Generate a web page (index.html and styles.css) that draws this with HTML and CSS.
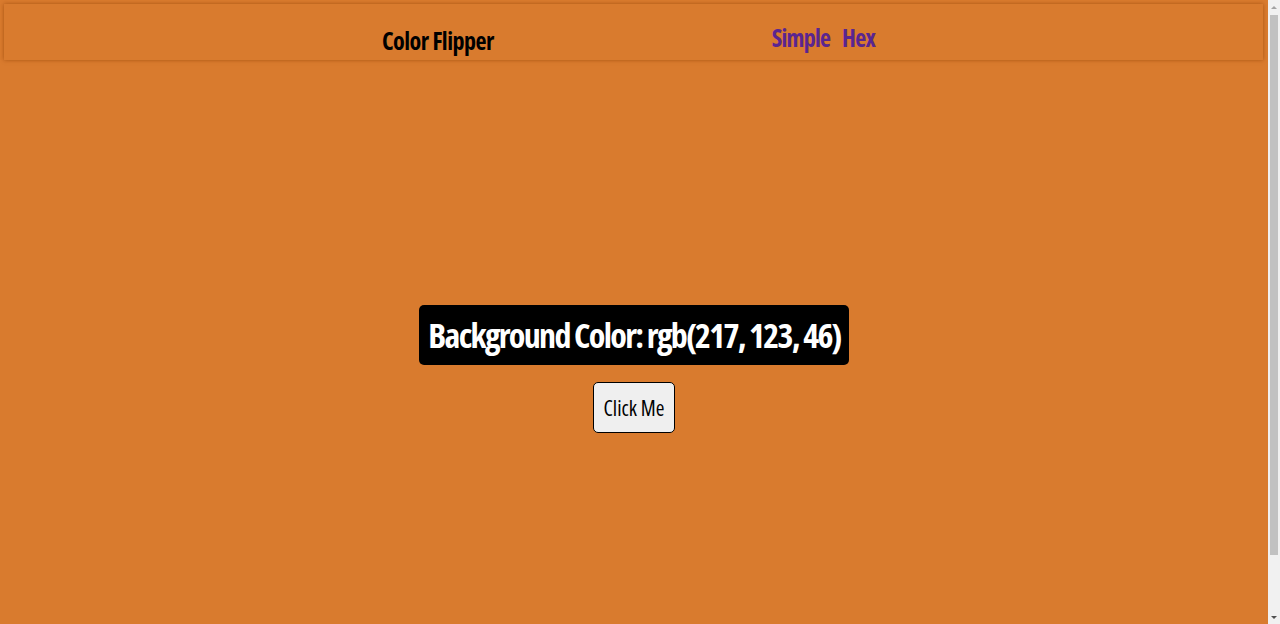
FILE: index.html
```html
<!DOCTYPE html>
<html lang="en">
<head>
<meta charset="utf-8">
<title>Color Flipper</title>
<link rel="stylesheet" href="styles.css">
</head>
<body>
<div class="page">
  <nav class="nav">
    <div class="brand">Color Flipper</div>
    <ul class="links">
      <li><a href="#" class="link">Simple</a></li>
      <li><a href="#" class="link">Hex</a></li>
    </ul>
  </nav>
  <main class="main">
    <h2 class="color-label">Background Color: <span class="color-value">rgb(217, 123, 46)</span></h2>
    <button class="btn" type="button">Click Me</button>
  </main>
</div>
<div class="scrollbar" aria-hidden="true">
  <div class="scroll-arrow up"></div>
  <div class="scroll-track"><div class="scroll-thumb"></div></div>
  <div class="scroll-arrow down"></div>
</div>
</body>
</html>
```
FILE: styles.css
```css
html, body {
  margin: 0;
  padding: 0;
}
body {
  background: rgb(217, 123, 46);
  font-family: "Open Sans", "Roboto", sans-serif;
  font-stretch: 75%;
}
.page {
  margin-right: 12px;
}
.nav {
  margin: 4px 5px 4px 4px;
  height: 56px;
  box-sizing: border-box;
  box-shadow: 0 0 4px rgba(150, 70, 10, 0.75);
  display: flex;
  align-items: center;
  justify-content: center;
  gap: 278px;
  padding: 10px 10px 0 0;
}
.brand {
  font-size: 24px;
  font-weight: 700;
  color: #000;
  padding-top: 6px;
  letter-spacing: -0.5px;
}
.links {
  list-style: none;
  margin: 0;
  padding: 0;
  display: flex;
  gap: 12px;
}
.link {
  color: #5a2590;
  text-decoration: none;
  font-size: 24px;
  font-weight: 700;
  letter-spacing: -0.8px;
}
.main {
  height: 100vh;
  display: flex;
  flex-direction: column;
  align-items: center;
  justify-content: center;
  gap: 17px;
  padding-bottom: 14px;
  box-sizing: border-box;
}
.color-label {
  margin: 0;
  background: #000;
  color: #fff;
  border-radius: 5px;
  height: 60px;
  line-height: 60px;
  padding: 0 8px 0 9px;
  font-size: 34px;
  font-weight: 700;
  letter-spacing: -1.7px;
  white-space: nowrap;
}
.btn {
  height: 51px;
  padding: 0 10px;
  background: #efefef;
  border: 1.5px solid #000;
  border-radius: 5px;
  font-family: inherit;
  font-stretch: 75%;
  font-size: 21px;
  font-weight: 400;
  color: #000;
}
.scrollbar {
  position: fixed;
  top: 0;
  right: 0;
  bottom: 0;
  width: 12px;
  background: #f1f1f1;
  display: flex;
  flex-direction: column;
}
.scroll-arrow {
  height: 14px;
  display: flex;
  align-items: center;
  justify-content: center;
}
.scroll-arrow::before {
  content: "";
  border-left: 3px solid transparent;
  border-right: 3px solid transparent;
}
.scroll-arrow.up::before {
  border-bottom: 3px solid #a3a3a3;
}
.scroll-arrow.down::before {
  border-top: 3px solid #505050;
}
.scroll-track {
  flex: 1;
  padding: 1px 2px;
}
.scroll-thumb {
  height: 540px;
  background: #c1c1c1;
}
```
